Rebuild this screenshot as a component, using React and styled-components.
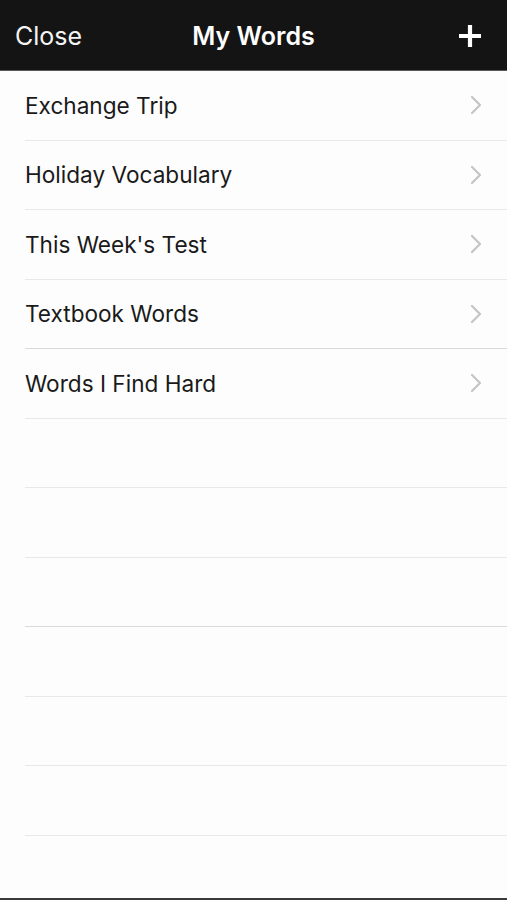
import React from 'react';
import styled, { createGlobalStyle } from 'styled-components';

const GlobalStyle = createGlobalStyle`
  html, body {
    margin: 0;
    padding: 0;
    background: #ffffff;
  }
  * {
    box-sizing: border-box;
  }
`;

const Screen = styled.div`
  width: 507px;
  height: 900px;
  display: flex;
  flex-direction: column;
  background: #fdfdfd;
  font-family: Inter, "Liberation Sans", sans-serif;
  border-bottom: 2px solid #3a3a3a;
  overflow: hidden;
`;

const NavBar = styled.header`
  height: 71px;
  flex-shrink: 0;
  display: grid;
  grid-template-columns: 1fr auto 1fr;
  align-items: center;
  padding: 2px 15px 0;
  background: #141414;
  border-bottom: 1px solid #5a5a5a;
  color: #ffffff;
`;

const CloseButton = styled.button`
  justify-self: start;
  padding: 0;
  border: none;
  background: none;
  color: #f4f4f4;
  font-family: inherit;
  font-size: 25px;
  cursor: pointer;
`;

const Title = styled.h1`
  margin: 0;
  font-size: 25px;
  font-weight: 600;
`;

const AddButton = styled.button`
  justify-self: end;
  display: flex;
  padding: 0 10px 0 0;
  border: none;
  background: none;
  cursor: pointer;
`;

const List = styled.ul`
  margin: 0;
  padding: 0 0 0 25px;
  list-style: none;
`;

const Row = styled.li`
  height: 69.5px;
  display: flex;
  align-items: center;
  justify-content: space-between;
  padding-right: 25px;
  border-bottom: 1px solid ${(p) => (p.$strong ? '#dadada' : '#e9e9e9')};
  font-size: 22.6px;
  color: #1a1a1a;
`;

const Chevron = () => (
  <svg width="12" height="20" viewBox="0 0 12 20">
    <path d="M2 2 L10 10 L2 18" fill="none" stroke="#c4c4c8" strokeWidth="2.2" strokeLinecap="round" strokeLinejoin="round" />
  </svg>
);

const PlusIcon = () => (
  <svg width="24" height="24" viewBox="0 0 24 24">
    <path d="M12 1 V23 M1 12 H23" stroke="#ffffff" strokeWidth="4.2" />
  </svg>
);

const lists = [
  'Exchange Trip',
  'Holiday Vocabulary',
  "This Week's Test",
  'Textbook Words',
  'Words I Find Hard',
];

export default function App() {
  const blanks = 6;
  return (
    <>
      <GlobalStyle />
      <Screen>
        <NavBar>
          <CloseButton>Close</CloseButton>
          <Title>My Words</Title>
          <AddButton aria-label="Add">
            <PlusIcon />
          </AddButton>
        </NavBar>
        <List>
          {lists.map((name, i) => (
            <Row key={name} $strong={i === 3}>
              {name}
              <Chevron />
            </Row>
          ))}
          {Array.from({ length: blanks }).map((_, i) => (
            <Row key={`blank-${i}`} $strong={i === 2} />
          ))}
        </List>
      </Screen>
    </>
  );
}
